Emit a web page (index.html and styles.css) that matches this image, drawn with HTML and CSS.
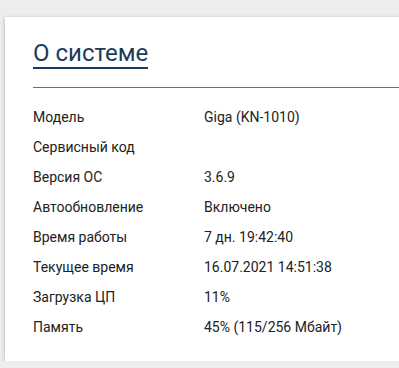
FILE: index.html
```html
<!DOCTYPE html>
<html lang="ru">
<head>
    <meta charset="UTF-8">
    <meta name="viewport" content="width=device-width, initial-scale=1.0">
    <title>О системе</title>
    <link rel="stylesheet" href="styles.css">
</head>
<body>
    <div class="card">
        <div class="card-header">
            <h2 class="card-title">О системе</h2>
        </div>
        <div class="info-list">
            <div class="info-row"><span class="info-label">Модель</span><span class="info-value">Giga (KN-1010)</span></div>
            <div class="info-row"><span class="info-label">Сервисный код</span><span class="info-value"></span></div>
            <div class="info-row"><span class="info-label">Версия ОС</span><span class="info-value">3.6.9</span></div>
            <div class="info-row"><span class="info-label">Автообновление</span><span class="info-value">Включено</span></div>
            <div class="info-row"><span class="info-label">Время работы</span><span class="info-value">7 дн. 19:42:40</span></div>
            <div class="info-row"><span class="info-label">Текущее время</span><span class="info-value">16.07.2021 14:51:38</span></div>
            <div class="info-row"><span class="info-label">Загрузка ЦП</span><span class="info-value">11%</span></div>
            <div class="info-row"><span class="info-label">Память</span><span class="info-value">45% (115/256 Мбайт)</span></div>
        </div>
    </div>
</body>
</html>
```

FILE: styles.css
```css
/* Global Styles */
body {
    background-color: #ededed;
    font-family: Roboto, "Liberation Sans", sans-serif;
    color: #222;
    margin: 0;
    padding: 17px 0 0 5px;
}

/* Card Styles */
.card {
    background-color: #fff;
    padding: 22px 0 19px 28px;
    box-shadow: 0px 1px 4px rgba(0, 0, 0, 0.25);
}

/* Header Styles */
.card-header {
    border-bottom: 1px solid #1f8ab6;
    padding-bottom: 18px;
}

.card-title {
    display: inline-block;
    margin: 0;
    font-size: 24px;
    font-weight: 400;
    line-height: 28px;
    color: #1d3a5a;
    border-bottom: 2px solid #1d3a5a;
}

/* Info List Styles */
.info-list {
    padding-top: 14px;
}

.info-row {
    display: flex;
    font-size: 14px;
    line-height: 30px;
    height: 30px;
}

.info-label {
    width: 171px;
    flex-shrink: 0;
}
```
